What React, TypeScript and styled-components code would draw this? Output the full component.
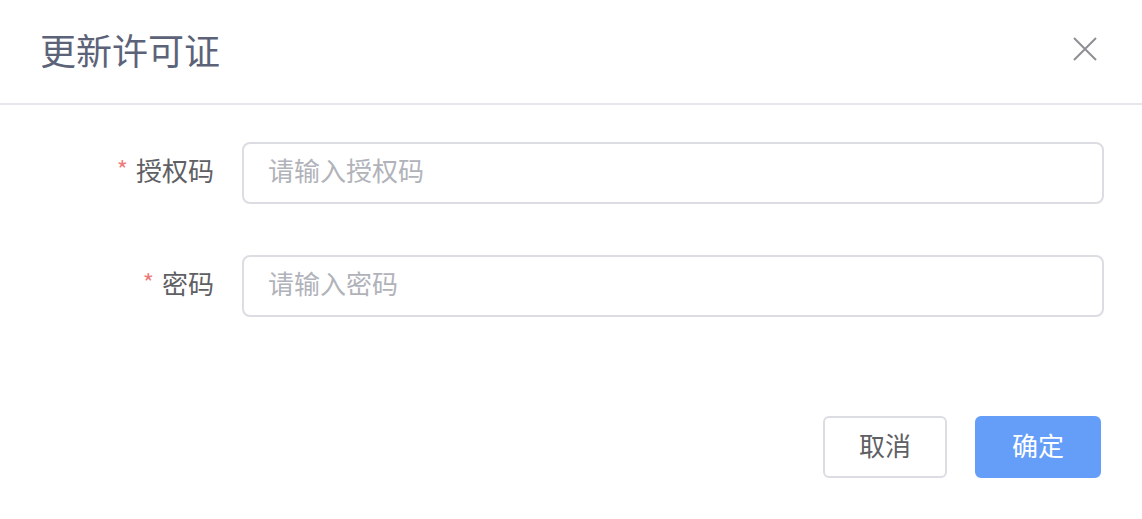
import React from "react";
import styled, { createGlobalStyle } from "styled-components";

const GlobalStyle = createGlobalStyle`
  html, body {
    margin: 0;
    padding: 0;
    background: #ffffff;
  }
  * {
    box-sizing: border-box;
  }
  body {
    font-family: "Noto Sans CJK SC", "Noto Sans", sans-serif;
  }
`;

const fields = [
  { label: "授权码", placeholder: "请输入授权码", type: "text" },
  { label: "密码", placeholder: "请输入密码", type: "password" }
];

const App: React.FC = () => {
  return (
    <Dialog>
      <GlobalStyle />
      <Header>
        <Title>更新许可证</Title>
        <CloseButton aria-label="close">
          <svg width="26" height="26" viewBox="0 0 26 26">
            <path
              d="M2 2 L24 24 M24 2 L2 24"
              stroke="#8e8f94"
              strokeWidth="2"
              fill="none"
            />
          </svg>
        </CloseButton>
      </Header>
      <Form>
        {fields.map((f) => (
          <Row key={f.label}>
            <Label>
              <Star>*</Star>
              {f.label}
            </Label>
            <Input type={f.type} placeholder={f.placeholder} />
          </Row>
        ))}
      </Form>
      <Footer>
        <Button>取消</Button>
        <Button primary>确定</Button>
      </Footer>
    </Dialog>
  );
};

const Dialog = styled.div`
  width: 1142px;
  height: 519px;
  background: #fff;
  display: flex;
  flex-direction: column;
`;

const Header = styled.div`
  height: 105px;
  padding: 0 44px 6px 40px;
  display: flex;
  align-items: center;
  justify-content: space-between;
  border-bottom: 2px solid #e6e6ec;
`;

const Title = styled.div`
  font-size: 36px;
  color: #5c6378;
  line-height: 1;
`;

const CloseButton = styled.button`
  border: none;
  background: none;
  padding: 0;
  display: flex;
  cursor: pointer;
`;

const Form = styled.div`
  padding: 37px 38px 0 0;
  display: flex;
  flex-direction: column;
  gap: 51px;
`;

const Row = styled.div`
  display: flex;
  align-items: center;
`;

const Label = styled.label`
  width: 242px;
  padding-right: 28px;
  margin-bottom: 7px;
  text-align: right;
  font-size: 26px;
  line-height: 1;
  color: #5f6064;
`;

const Star = styled.span`
  color: #ee7b7b;
  font-size: 24px;
  margin-right: 8px;
  position: relative;
  top: -2px;
`;

const Input = styled.input`
  flex: 1;
  height: 62px;
  border: 2px solid #dcdde3;
  border-radius: 8px;
  padding: 0 24px 7px 24px;
  font-size: 26px;
  font-family: inherit;
  color: #5f6064;
  outline: none;

  &::placeholder {
    color: #b1b3ba;
  }
`;

const Footer = styled.div`
  display: flex;
  justify-content: flex-end;
  gap: 28px;
  padding: 99px 41px 0 0;
`;

const Button = styled.button<{ primary?: boolean }>`
  width: ${(p) => (p.primary ? "126px" : "124px")};
  height: 62px;
  padding: 0 0 6px 0;
  border-radius: 6px;
  border: 2px solid ${(p) => (p.primary ? "#659ef8" : "#dcdde3")};
  background: ${(p) => (p.primary ? "#659ef8" : "#fff")};
  color: ${(p) => (p.primary ? "#fff" : "#5f6064")};
  font-size: 26px;
  font-family: inherit;
  cursor: pointer;
`;

export default App;
